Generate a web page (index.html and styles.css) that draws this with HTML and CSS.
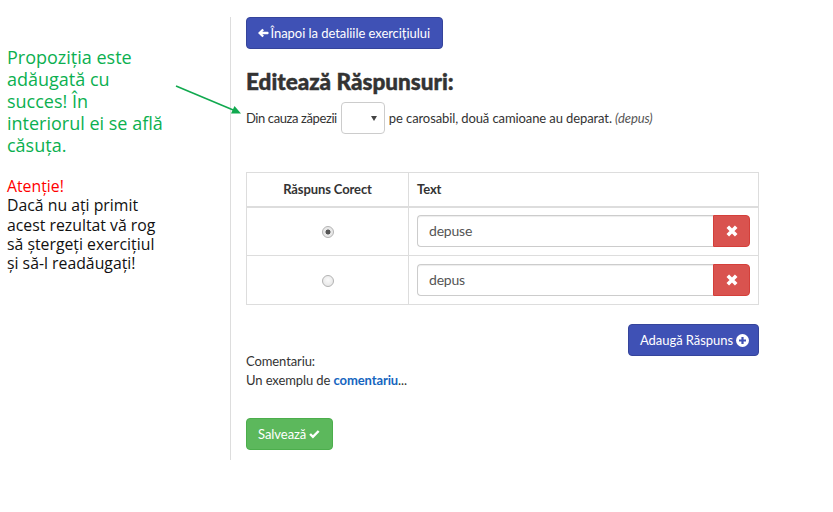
FILE: index.html
```html
<!DOCTYPE html>
<html lang="ro">
<head>
<meta charset="utf-8">
<title>Editează Răspunsuri</title>
<link rel="stylesheet" href="styles.css">
</head>
<body>
<div class="page">
  <aside class="side">
    <p class="note-ok">Propoziția este adăugată cu succes! În interiorul ei se află căsuța.</p>
    <p class="note-warn"><span class="warn-title">Atenție!</span><br>Dacă nu ați primit acest rezultat vă rog să ștergeți exercițiul și să-l readăugați!</p>
  </aside>
  <svg class="pointer" width="80" height="40" viewBox="0 0 80 40">
    <line x1="1" y1="1" x2="63" y2="27" stroke="#11a94f" stroke-width="1.6"/>
    <polygon points="66,28.5 56,28.5 59.5,21" fill="#11a94f"/>
  </svg>
  <main class="main">
    <button class="btn btn-blue btn-back">
      <svg class="ico" width="14" height="12" viewBox="0 0 14 12"><path d="M0 6 L5.8 0.2 L8 2.4 L5.7 4.3 L13 4.3 Q14 4.3 14 5.3 L14 6.7 Q14 7.7 13 7.7 L5.7 7.7 L8 9.6 L5.8 11.8 Z" fill="#fff"/></svg>Înapoi la detaliile exercițiului
    </button>
    <h1 class="title">Editează Răspunsuri:</h1>
    <p class="sentence"><span class="lead">Din cauza zăpezii</span><span class="select"><span class="caret"></span></span><span>pe carosabil, două camioane au deparat. <em>(depus)</em></span></p>

    <table class="answers">
      <thead>
        <tr><th class="col-ok">Răspuns Corect</th><th class="col-text">Text</th></tr>
      </thead>
      <tbody>
        <tr>
          <td class="col-ok"><input type="radio" name="ok" class="radio" checked></td>
          <td class="col-text">
            <div class="input-group">
              <input class="field" type="text" value="depuse">
              <button class="btn-del"><svg width="12" height="12" viewBox="0 0 12 12"><path d="M1.8 1.8 L10.2 10.2 M10.2 1.8 L1.8 10.2" stroke="#fff" stroke-width="3.6"/></svg></button>
            </div>
          </td>
        </tr>
        <tr>
          <td class="col-ok"><input type="radio" name="ok" class="radio"></td>
          <td class="col-text">
            <div class="input-group">
              <input class="field" type="text" value="depus">
              <button class="btn-del"><svg width="12" height="12" viewBox="0 0 12 12"><path d="M1.8 1.8 L10.2 10.2 M10.2 1.8 L1.8 10.2" stroke="#fff" stroke-width="3.6"/></svg></button>
            </div>
          </td>
        </tr>
      </tbody>
    </table>

    <div class="actions">
      <button class="btn btn-blue btn-add">Adaugă Răspuns<svg class="ico-r" width="13" height="13" viewBox="0 0 13 13"><circle cx="6.5" cy="6.5" r="6.5" fill="#fff"/><path d="M6.5 3 V10 M3 6.5 H10" stroke="#3f51b5" stroke-width="2.2"/></svg></button>
    </div>

    <div class="comment">
      <div>Comentariu:</div>
      <div>Un exemplu de <b class="hl">comentariu</b><span>...</span></div>
    </div>

    <button class="btn btn-green btn-save">Salvează<svg class="ico-r" width="15" height="12" viewBox="0 0 15 12"><path d="M1.5 6 L5.5 10 L13.5 1.8" fill="none" stroke="#fff" stroke-width="3.4"/></svg></button>
  </main>
</div>
</body>
</html>
```
FILE: styles.css
```css
* { box-sizing: border-box; }
html, body { margin: 0; padding: 0; background: #fff; }
body {
  font-family: "Source Sans Pro", Lato, "Liberation Sans", sans-serif;
  font-size: 13px;
  letter-spacing: -0.1px;
  color: #333;
}
.page {
  display: flex;
  align-items: flex-start;
  position: relative;
}
.side {
  width: 230px;
  flex: none;
  padding: 46px 0 0 7px;
  font-family: "Open Sans", sans-serif;
  letter-spacing: 0;
}
.side p { margin: 0; width: 162px; }
.note-ok {
  color: #0bb050;
  font-size: 18px;
  line-height: 22px;
  margin-bottom: 21px !important;
}
.note-warn {
  color: #111;
  font-size: 15.8px;
  line-height: 19.3px;
}
.warn-title { color: #f00; }
.pointer {
  position: absolute;
  left: 175px;
  top: 85px;
}
.main {
  margin-top: 17px;
  border-left: 1px solid #ddd;
  padding-left: 15px;
  width: 529px;
  min-height: 443px;
}
.btn {
  display: inline-flex;
  align-items: center;
  height: 32px;
  border: 0;
  border-radius: 4px;
  color: #fff;
  font-family: inherit;
  font-size: 13px;
  letter-spacing: -0.05px;
  white-space: nowrap;
  padding: 0 12px;
  cursor: pointer;
}
.btn-blue { background: #3f51b5; border: 1px solid #35449b; }
.btn-green { background: #5cb85c; border: 1px solid #4cae4c; }
.btn-back { width: 197px; padding-left: 11px; }
.ico { margin-right: 2px; }
.ico-r { margin-left: 3px; }
.title {
  margin: 21px 0 0;
  font-size: 22.5px;
  line-height: 24px;
  font-weight: 900;
  letter-spacing: 0;
  color: #333;
  -webkit-text-stroke: 0.45px #333;
}
.sentence {
  margin: 7px 0 0;
  line-height: 34px;
  display: flex;
  align-items: center;
  white-space: pre;
}
.lead { letter-spacing: -0.4px; }
.sentence em { color: #555; }
.select {
  display: inline-flex;
  align-items: center;
  justify-content: flex-end;
  width: 44px;
  height: 32px;
  border: 1px solid #ccc;
  border-radius: 4px;
  padding-right: 7px;
  margin: 0 4px;
}
.caret {
  width: 0;
  height: 0;
  border-left: 3px solid transparent;
  border-right: 3px solid transparent;
  border-top: 5px solid #444;
}
.answers {
  margin-top: 37px;
  width: 513px;
  border-collapse: collapse;
  border: 1px solid #ddd;
}
.answers th, .answers td {
  border: 1px solid #ddd;
  padding: 8px;
}
.answers th {
  height: 34px;
  padding: 7px 8px;
  line-height: 18px;
  font-weight: 700;
  color: #333;
  border-bottom: 2px solid #ddd;
}
.answers td { height: 49px; padding: 7px 8px 8px; }
.col-ok { width: 162px; text-align: center; }
.col-text { text-align: left; }
.radio {
  appearance: none;
  -webkit-appearance: none;
  width: 12px;
  height: 12px;
  margin: 0;
  border-radius: 50%;
  border: 1px solid #b3b3b3;
  background: radial-gradient(circle at 50% 40%, #fafafa, #e2e2e2);
  vertical-align: middle;
}
.radio:checked {
  background: radial-gradient(circle, #555 0 2.2px, #e8e8e8 2.8px);
}
.input-group {
  display: flex;
  height: 32px;
}
.field {
  flex: 1;
  min-width: 0;
  height: 32px;
  border: 1px solid #ccc;
  border-right: 0;
  border-radius: 4px 0 0 4px;
  padding: 0 11px;
  font-family: inherit;
  font-size: 14px;
  letter-spacing: -0.2px;
  color: #555;
  box-shadow: inset 0 1px 1px rgba(0,0,0,.075);
}
.btn-del {
  width: 37px;
  height: 32px;
  border: 1px solid #d43f3a;
  background: #d9534f;
  border-radius: 0 4px 4px 0;
  display: flex;
  align-items: center;
  justify-content: center;
  padding: 0;
}
.actions {
  display: flex;
  justify-content: flex-end;
  width: 513px;
  margin-top: 19px;
  margin-bottom: -4px;
}
.btn-add { width: 131px; padding: 0 0 0 11px; }
.comment {
  line-height: 19px;
}
.hl { color: #1565c0; }
.btn-save {
  margin-top: 28px;
  width: 87px;
  padding-left: 11px;
}
```
